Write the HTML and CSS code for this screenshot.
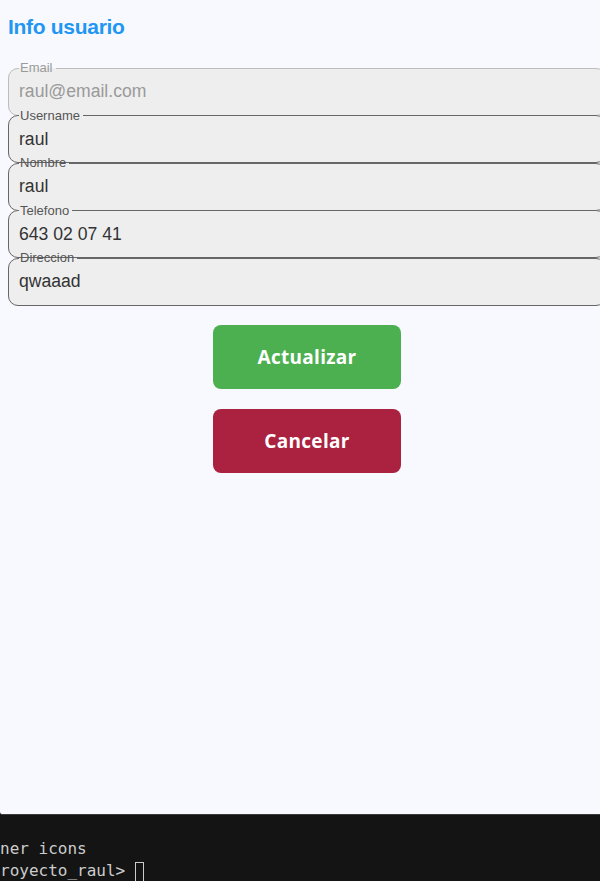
FILE: index.html
```html
<!DOCTYPE html>
<html lang="es">
<head>
<meta charset="utf-8">
<title>Info usuario</title>
<link rel="stylesheet" href="styles.css">
</head>
<body>
<div class="screen">
  <h1 class="title">Info usuario</h1>
  <form class="form">
    <fieldset class="field field-disabled">
      <legend>Email</legend>
      <div class="value">raul@email.com</div>
    </fieldset>
    <fieldset class="field">
      <legend>Username</legend>
      <div class="value">raul</div>
    </fieldset>
    <fieldset class="field">
      <legend>Nombre</legend>
      <div class="value">raul</div>
    </fieldset>
    <fieldset class="field">
      <legend>Telefono</legend>
      <div class="value">643 02 07 41</div>
    </fieldset>
    <fieldset class="field">
      <legend>Direccion</legend>
      <div class="value">qwaaad</div>
    </fieldset>
    <div class="actions">
      <button type="button" class="btn btn-update">Actualizar</button>
      <button type="button" class="btn btn-cancel">Cancelar</button>
    </div>
  </form>
</div>
<div class="terminal">
  <div class="line">ner icons</div>
  <div class="line">royecto_raul&gt; <span class="cursor"></span></div>
</div>
</body>
</html>
```
FILE: styles.css
```css
html, body {
  margin: 0;
  padding: 0;
  overflow: hidden;
  background: #141414;
}
.screen {
  height: 815px;
  box-sizing: border-box;
  background: #f8f9fe;
  padding: 14px 0 0 8px;
  overflow: hidden;
  border-bottom: 1px solid #3a3a3a;
  border-bottom-left-radius: 3px;
}
.title {
  margin: 0;
  font-family: "Liberation Sans", Arial, sans-serif;
  font-weight: 700;
  font-size: 21px;
  line-height: 26px;
  color: #2196f3;
  letter-spacing: -0.3px;
}
.form {
  width: 598px;
  margin-top: 21px;
}
.field {
  margin: -7px 0 0 0;
  padding: 0 10px;
  border: 1px solid #666;
  border-radius: 10px;
  background: #eeeeee;
  font-family: "Liberation Sans", Arial, sans-serif;
}
.field:first-child {
  margin-top: 0;
}
.field legend {
  padding: 0 3px 0 1px;
  font-size: 13px;
  line-height: 14px;
  color: #555;
}
.value {
  font-size: 17.6px;
  line-height: 21px;
  padding: 6px 0 12.6px;
  color: #333;
}
.field-disabled {
  border-color: #bcbcbc;
}
.field-disabled legend,
.field-disabled .value {
  color: #9a9a9a;
}
.actions {
  display: flex;
  flex-direction: column;
  align-items: center;
  gap: 20px;
  margin-top: 19px;
}
.btn {
  width: 188px;
  height: 64px;
  border: none;
  border-radius: 8px;
  color: #fff;
  font-family: "Open Sans", sans-serif;
  font-weight: 700;
  font-size: 19px;
  letter-spacing: 0.3px;
  padding: 0;
}
.btn-update {
  background: #4caf50;
}
.btn-cancel {
  background: #aa223f;
}
.terminal {
  padding-top: 23px;
  font-family: "DejaVu Sans Mono", monospace;
  font-size: 16px;
  line-height: 22px;
  color: #cccccc;
}
.line {
  white-space: pre;
}
.cursor {
  display: inline-block;
  width: 9px;
  height: 20px;
  box-sizing: border-box;
  border: 1px solid #cccccc;
  vertical-align: -6px;
}
```
